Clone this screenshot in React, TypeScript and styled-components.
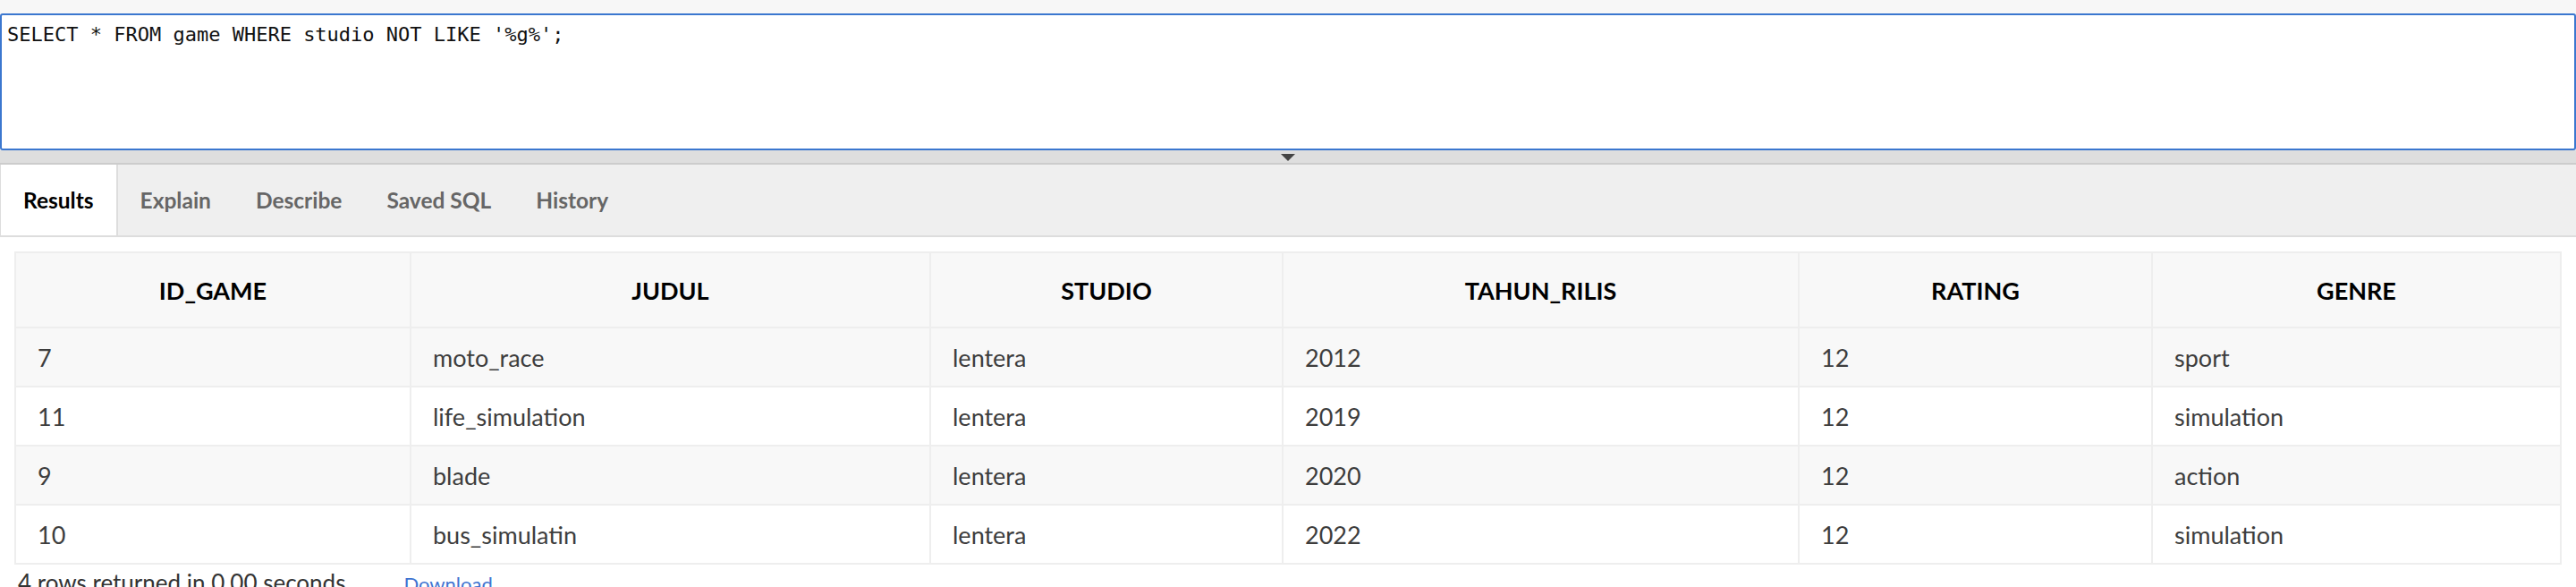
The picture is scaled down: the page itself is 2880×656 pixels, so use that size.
import React from "react";
import styled, { createGlobalStyle } from "styled-components";

const GlobalStyle = createGlobalStyle`
  html, body { margin: 0; padding: 0; background: #ffffff; }
  body { font-family: Lato, "Open Sans", sans-serif; color: #333; }
  * { box-sizing: border-box; }
`;

const EditorArea = styled.div`
  background: #f7f7f7;
  padding-top: 15px;
`;

const SqlBox = styled.div`
  height: 153px;
  border: 2px solid #3b77cf;
  border-radius: 3px;
  background: #ffffff;
  padding: 9px 6px;
  font-family: "DejaVu Sans Mono", "Liberation Mono", monospace;
  font-size: 22px;
  color: #111;
  white-space: pre;
`;

const Splitter = styled.div`
  height: 16px;
  background: #dedede;
  border-bottom: 2px solid #cccccc;
  display: flex;
  justify-content: center;
  align-items: flex-start;
  padding-top: 4px;
`;

const Arrow = styled.span`
  width: 0;
  height: 0;
  border-left: 8px solid transparent;
  border-right: 8px solid transparent;
  border-top: 8px solid #444444;
`;

const TabBar = styled.div`
  display: flex;
  height: 81px;
  background: #efefef;
  border-bottom: 2px solid #dddddd;
`;

const Tab = styled.div<{ $active?: boolean }>`
  display: flex;
  align-items: center;
  padding: 0 25px;
  font-size: 24.5px;
  font-weight: 700;
  color: ${(p) => (p.$active ? "#000000" : "#666666")};
  background: ${(p) => (p.$active ? "#ffffff" : "transparent")};
  border-left: ${(p) => (p.$active ? "1px solid #dddddd" : "none")};
  border-right: ${(p) => (p.$active ? "2px solid #dddddd" : "none")};
`;

const Content = styled.div`
  padding: 16px 18px 0 16px;
`;

const Table = styled.table`
  width: 100%;
  table-layout: fixed;
  border-collapse: collapse;
  border: 2px solid #eeeeee;
`;

const HeadCell = styled.th`
  height: 84px;
  background: #f8f8f8;
  border: 2px solid #eeeeee;
  font-size: 27px;
  font-weight: 700;
  color: #000000;
  text-align: center;
  vertical-align: middle;
  padding: 0 24px;
`;

const Row = styled.tr<{ $striped: boolean }>`
  background: ${(p) => (p.$striped ? "#f8f8f8" : "#ffffff")};
`;

const Cell = styled.td`
  height: 66px;
  border: 2px solid #eeeeee;
  font-size: 27px;
  color: #3d3d3d;
  padding: 0 24px;
  vertical-align: middle;
`;

const Footer = styled.div`
  display: flex;
  align-items: baseline;
  padding: 4px 0 0 4px;
  font-size: 26px;
  color: #333333;
`;

const DownloadLink = styled.a`
  margin-left: 65px;
  font-size: 22px;
  color: #3f74d1;
  text-decoration: none;
`;

const columns = [
  { name: "ID_GAME", width: 442 },
  { name: "JUDUL", width: 581 },
  { name: "STUDIO", width: 394 },
  { name: "TAHUN_RILIS", width: 577 },
  { name: "RATING", width: 395 },
  { name: "GENRE", width: 457 },
];

const rows = [
  ["7", "moto_race", "lentera", "2012", "12", "sport"],
  ["11", "life_simulation", "lentera", "2019", "12", "simulation"],
  ["9", "blade", "lentera", "2020", "12", "action"],
  ["10", "bus_simulatin", "lentera", "2022", "12", "simulation"],
];

const tabs = ["Results", "Explain", "Describe", "Saved SQL", "History"];

export default function App() {
  return (
    <>
      <GlobalStyle />
      <EditorArea>
        <SqlBox>SELECT * FROM game WHERE studio NOT LIKE '%g%';</SqlBox>
        <Splitter>
          <Arrow />
        </Splitter>
      </EditorArea>
      <TabBar>
        {tabs.map((t, i) => (
          <Tab key={t} $active={i === 0}>
            {t}
          </Tab>
        ))}
      </TabBar>
      <Content>
        <Table>
          <colgroup>
            {columns.map((c) => (
              <col key={c.name} style={{ width: c.width }} />
            ))}
          </colgroup>
          <thead>
            <tr>
              {columns.map((c) => (
                <HeadCell key={c.name}>{c.name}</HeadCell>
              ))}
            </tr>
          </thead>
          <tbody>
            {rows.map((r, i) => (
              <Row key={i} $striped={i % 2 === 0}>
                {r.map((v, j) => (
                  <Cell key={j}>{v}</Cell>
                ))}
              </Row>
            ))}
          </tbody>
        </Table>
        <Footer>
          <span>4 rows returned in 0.00 seconds</span>
          <DownloadLink href="#">Download</DownloadLink>
        </Footer>
      </Content>
    </>
  );
}
